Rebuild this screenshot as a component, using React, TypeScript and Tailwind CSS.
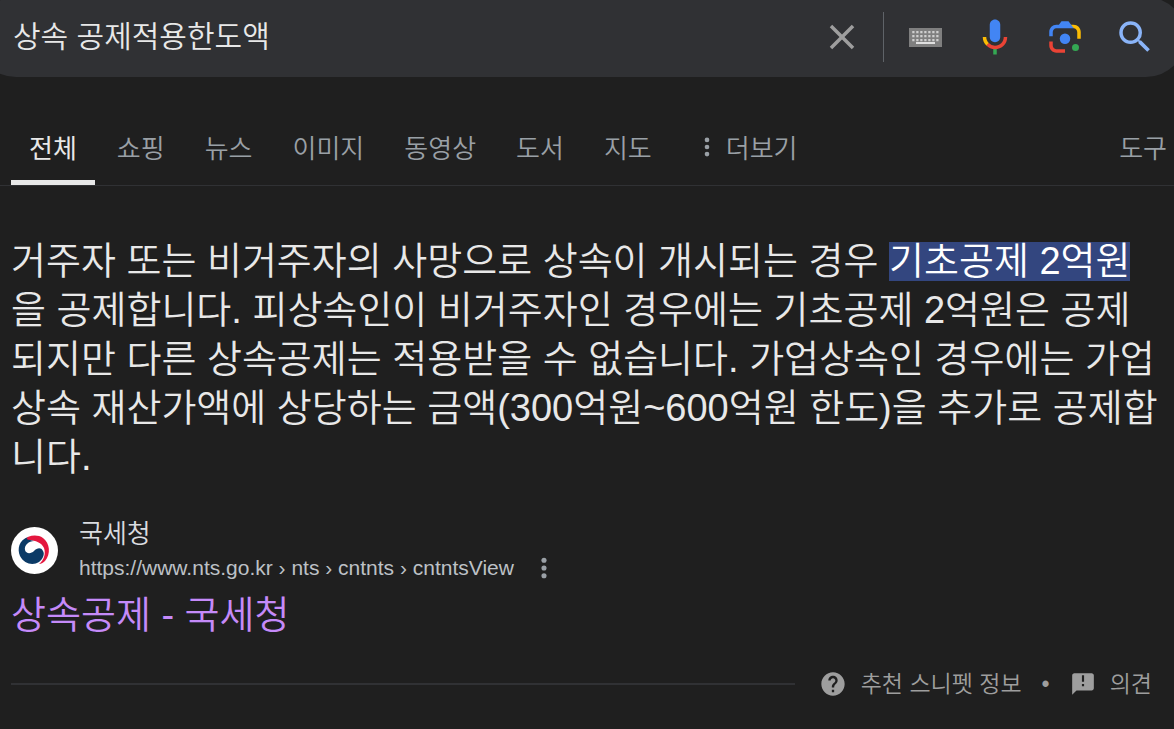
const tabs = ["쇼핑", "뉴스", "이미지", "동영상", "도서", "지도"];

const keyRows = [4, 8, 12];
const keyCols = [4, 8, 12, 16, 20, 24, 28];

function CloseIcon() {
  return (
    <svg className="h-[42px] w-[42px]" viewBox="0 0 24 24" fill="#9e9e9e" aria-hidden="true">
      <path d="M19 6.41L17.59 5 12 10.59 6.41 5 5 6.41 10.59 12 5 17.59 6.41 19 12 13.41 17.59 19 19 17.59 13.41 12z" />
    </svg>
  );
}

function KeyboardIcon() {
  return (
    <svg className="h-[19px] w-[33px]" viewBox="0 0 33 19" aria-hidden="true">
      <rect width="33" height="19" fill="#7f7f7f" />
      {keyRows.map((y) =>
        keyCols.map((x) => <rect key={`${x}-${y}`} x={x - 0.75} y={y - 1} width="2.25" height="2.25" fill="#cfcfcf" />)
      )}
      <rect x="7" y="14" width="19" height="2" fill="#e0e0e0" />
    </svg>
  );
}

function MicIcon() {
  return (
    <svg className="h-[42px] w-[42px]" viewBox="0 0 24 24" aria-hidden="true">
      <path fill="#4285f4" d="M12 15c1.66 0 3-1.31 3-2.97v-7.02c0-1.66-1.34-3.01-3-3.01s-3 1.34-3 3.01v7.02c0 1.66 1.34 2.97 3 2.97z" />
      <path fill="#34a853" d="M11 18.08h2v3.92h-2z" />
      <path fill="#fbbc04" d="M7.05 16.87c-1.27-1.33-2.05-2.83-2.05-4.87h2c0 1.45.56 2.42 1.47 3.38v.32l-1.15 1.18z" />
      <path fill="#ea4335" d="M12 16.93a4.97 5.25 0 0 1-3.54-1.55l-1.41 1.49c1.26 1.34 3.02 2.13 4.95 2.13 3.87 0 6.99-2.92 6.99-7h-1.99c0 2.92-2.24 4.93-5 4.93z" />
    </svg>
  );
}

function LensIcon() {
  return (
    <svg className="h-[42px] w-[42px]" viewBox="0 0 192 192" aria-hidden="true">
      <circle fill="#34a853" cx="144" cy="144" r="16" />
      <circle fill="#4285f4" cx="96" cy="104" r="24" />
      <path fill="#ea4335" d="M24 135.2c0 18.11 14.69 32.8 32.8 32.8H96v-16l-40.1-.1c-8.8 0-15.9-8.19-15.9-17.9v-18H24v19.2z" />
      <path fill="#fbbc04" d="M168 72.8c0-18.11-14.69-32.8-32.8-32.8H116l20 16c8.8 0 16 8.29 16 18v30h16V72.8z" />
      <path fill="#4285f4" d="M112 24H80L68 40H56.8C38.69 40 24 54.69 24 72.8V92h16V74c0-9.71 7.2-18 16-18h80L112 24z" />
    </svg>
  );
}

function SearchIcon() {
  return (
    <svg className="h-[42px] w-[42px]" viewBox="0 0 24 24" fill="#8ab4f8" aria-hidden="true">
      <path d="M15.5 14h-.79l-.28-.27A6.471 6.471 0 0 0 16 9.5 6.5 6.5 0 1 0 9.5 16c1.61 0 3.09-.59 4.23-1.57l.27.28v.79l5 4.99L20.49 19l-4.99-5zm-6 0C7.01 14 5 11.99 5 9.5S7.01 5 9.5 5 14 7.01 14 9.5 11.99 14 9.5 14z" />
    </svg>
  );
}

function DotsIcon({ className }: { className: string }) {
  return (
    <svg className={className} viewBox="0 0 6 24" fill="#9aa0a6" aria-hidden="true">
      <circle cx="3" cy="3.5" r="2.8" />
      <circle cx="3" cy="12" r="2.8" />
      <circle cx="3" cy="20.5" r="2.8" />
    </svg>
  );
}

function TaxServiceLogo() {
  return (
    <svg className="h-[47px] w-[47px] shrink-0" viewBox="0 0 47 47" aria-hidden="true">
      <circle cx="23.5" cy="23.5" r="23.5" fill="#fff" />
      <path fill="#e4173e" d="M12 14C17 8 26 7 32 11C39 16 40 27 34 34C32 36 30 37 28 37C33 33 35 27 33 21C30 14 20 12 12 14Z" />
      <path fill="#0b3a66" d="M17 10C8 13 6 22 9 29C13 37 22 39 28 35C32 32 34 27 32 24C30 20 26 21 23 24C20 27 15 27 14 23C13 18 18 14 23 14C17 12 14 13 17 10Z" />
    </svg>
  );
}

export default function App() {
  return (
    <div className="min-h-screen overflow-hidden bg-[#1f1f1f] font-['Liberation_Sans','Noto_Sans_CJK_KR',sans-serif] font-[350] text-[#e8e8e8]">
      <header>
        <form className="-mt-[3px] -mr-3 -ml-6 flex h-20 items-center rounded-full bg-[#303134] pr-[30px] pl-[37px]">
          <input
            type="text"
            aria-label="검색"
            defaultValue="상속 공제적용한도액"
            className="min-w-0 flex-1 bg-transparent text-[30px] leading-[40px] outline-none"
          />
          <button type="button" aria-label="지우기">
            <CloseIcon />
          </button>
          <div className="mx-5 h-[50px] w-px bg-[#5f6368]" />
          <div className="flex items-center gap-7">
            <button type="button" aria-label="입력 도구" className="flex w-[42px] justify-center">
              <KeyboardIcon />
            </button>
            <button type="button" aria-label="음성 검색">
              <MicIcon />
            </button>
            <button type="button" aria-label="이미지로 검색">
              <LensIcon />
            </button>
            <button type="submit" aria-label="Google 검색">
              <SearchIcon />
            </button>
          </div>
        </form>

        <nav className="mt-9 flex border-b border-[#303134] pr-[7px] pl-[11px] text-[26px] leading-[36px] text-[#9aa0a6]">
          <div className="flex flex-1 gap-1">
            <a href="#all" className="border-b-[5px] border-[#e8e8e8] px-[18px] pt-[18px] pb-[13px] font-normal text-[#e8e8e8]">
              전체
            </a>
            {tabs.map((tab) => (
              <a key={tab} href={`#${tab}`} className="px-[18px] pt-[18px]">
                {tab}
              </a>
            ))}
            <button type="button" className="flex items-start gap-4 pt-[18px] pl-[30px]">
              <DotsIcon className="mt-[6px] h-5 w-[6px]" />
              더보기
            </button>
          </div>
          <a href="#tools" className="pt-[18px]">
            도구
          </a>
        </nav>
      </header>

      <main className="pr-4 pl-[11px]">
        <p className="mt-[51px] text-[38px] leading-[49px]">
          거주자 또는 비거주자의 사망으로 상속이 개시되는 경우{" "}
          <mark className="inline-block bg-[#33467f] leading-[39px] text-white">기초공제 2억원</mark>을 공제합니다.
          피상속인이 비거주자인 경우에는 기초공제 2억원은 공제되지만 다른 상속공제는 적용받을 수 없습니다. 가업상속인
          경우에는 가업상속 재산가액에 상당하는 금액(300억원~600억원 한도)을 추가로 공제합니다.
        </p>

        <div className="mt-[34px] flex items-center gap-[21px]">
          <TaxServiceLogo />
          <div>
            <div className="text-[26px] leading-[36px] text-[#dadce0]">국세청</div>
            <div className="flex items-center gap-[27px] text-[21px] leading-[32px] text-[#bdc1c6]">
              <cite className="not-italic">https://www.nts.go.kr › nts › cntnts › cntntsView</cite>
              <button type="button" aria-label="이 검색결과에 대한 정보">
                <DotsIcon className="h-[22px] w-[6px]" />
              </button>
            </div>
          </div>
        </div>

        <h3 className="mt-1 text-[38px] leading-[54px] font-[350]">
          <a href="https://www.nts.go.kr" className="text-[#c58af9]">
            상속공제 - 국세청
          </a>
        </h3>
      </main>

      <footer className="mt-[26px] flex items-center pr-[22px] pl-[11px] text-[23px] leading-[32px] text-[#9e9e9e]">
        <div className="h-[2px] flex-1 bg-[#303134]" />
        <a href="#about" className="ml-6 flex items-center gap-[14px]">
          <svg className="h-7 w-7" viewBox="0 0 24 24" fill="#9e9e9e" aria-hidden="true">
            <path d="M12 2C6.48 2 2 6.48 2 12s4.48 10 10 10 10-4.48 10-10S17.52 2 12 2zm1 17h-2v-2h2v2zm2.07-7.75l-.9.92C13.45 12.9 13 13.5 13 15h-2v-.5c0-1.1.45-2.1 1.17-2.83l1.24-1.26c.37-.36.59-.86.59-1.41 0-1.1-.9-2-2-2s-2 .9-2 2H8c0-2.21 1.79-4 4-4s4 1.79 4 4c0 .88-.36 1.68-.93 2.25z" />
          </svg>
          추천 스니펫 정보
        </a>
        <span className="mx-5">•</span>
        <a href="#feedback" className="flex items-center gap-[14px]">
          <svg className="h-[26px] w-[26px]" viewBox="0 0 24 24" fill="#9e9e9e" aria-hidden="true">
            <path d="M20 2H4c-1.1 0-1.99.9-1.99 2L2 22l4-4h14c1.1 0 2-.9 2-2V4c0-1.1-.9-2-2-2zm-7 12h-2v-2h2v2zm0-4h-2V4h2v6z" />
          </svg>
          의견
        </a>
      </footer>
    </div>
  );
}
